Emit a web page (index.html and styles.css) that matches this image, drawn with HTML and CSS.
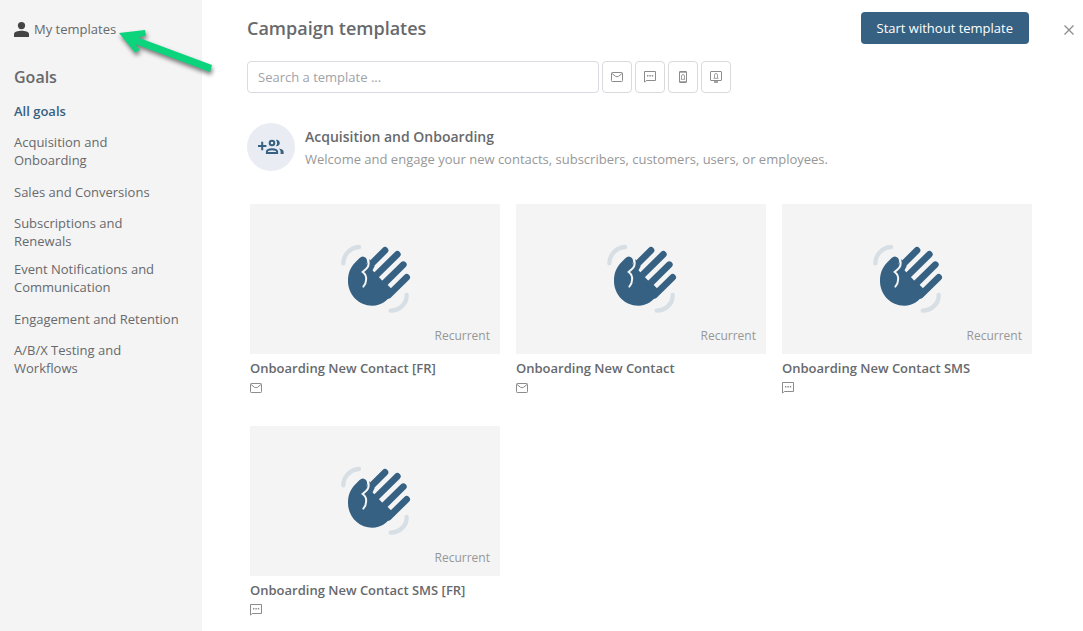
FILE: index.html
```html
<!DOCTYPE html>
<html lang="en">
<head>
    <meta charset="UTF-8">
    <meta name="viewport" content="width=device-width, initial-scale=1.0">
    <title>Campaign templates</title>
    <link rel="stylesheet" href="styles.css">
</head>
<body>
    <svg class="symbols" aria-hidden="true">
        <symbol id="icon-mail" viewBox="0 0 12 10">
            <rect x="0.5" y="0.5" width="11" height="9" rx="0.8" fill="none" stroke="currentColor"/>
            <path d="M1 1.5 L4.5 4.3 Q6 5.2 7.5 4.3 L11 1.5" fill="none" stroke="currentColor"/>
        </symbol>
        <symbol id="icon-sms" viewBox="0 0 12 12">
            <path d="M0.5 11.2 V0.5 H11.5 V9.5 H2.2 Z" fill="none" stroke="currentColor"/>
            <path d="M3 4h1.4v1.4H3zM5.4 4h1.4v1.4H5.4zM7.8 4h1.4v1.4H7.8z" fill="currentColor"/>
        </symbol>
        <symbol id="icon-hand" viewBox="0 0 330 285">
            <path class="wave" d="M70 100 C70 75 90 53 117 51"/>
            <path class="wave" d="M260 195 C261 220 240 241 212 242"/>
            <path class="palm" d="M118 85 Q128 74 138 84 Q144 92 139 104 L140 112 L148 112 L163 127 L177 142 L187 152 L203 165 L213 175 L219 190 C199 214 184 227 157 227 C116 227 84 194 84 153 C84 129 91 113 104 99 Z"/>
            <path class="palm" d="M143 95 L148 88 L164 108 L152 132 L138 128 Z"/>
            <path class="finger" d="M140 116 L195 61"/>
            <path class="finger" d="M168 136 L232 73"/>
            <path class="finger" d="M191 162 L250 104"/>
            <path class="finger" d="M205 196 L260 142"/>
            <path class="crease" d="M145 90 Q149 108 138 117 L128 126 Q141 135 138 151 Q138 162 130 170"/>
        </symbol>
    </svg>

    <div class="page">
        <aside class="sidebar">
            <div class="my-templates">
                <svg class="user-icon" viewBox="0 0 15 15" aria-hidden="true">
                    <circle cx="7.5" cy="3.6" r="3.6"/>
                    <path d="M0 15 V12.2 C0 9.8 4 8.8 7.5 8.8 S15 9.8 15 12.2 V15 Z"/>
                </svg>
                <a href="#">My templates</a>
                <svg class="arrow" viewBox="0 0 102 60" aria-hidden="true">
                    <path d="M4 11 L30 8 L31 13.5 L23 15.5 L97 43 L95 50 L20 22 L25 28 L20 30.5 Z"/>
                </svg>
            </div>
            <h2 class="goals-title">Goals</h2>
            <nav class="goals">
                <a class="goal active" href="#">All goals</a>
                <a class="goal" href="#">Acquisition and Onboarding</a>
                <a class="goal" href="#">Sales and Conversions</a>
                <a class="goal" href="#">Subscriptions and Renewals</a>
                <a class="goal" href="#">Event Notifications and Communication</a>
                <a class="goal" href="#">Engagement and Retention</a>
                <a class="goal" href="#">A/B/X Testing and Workflows</a>
            </nav>
        </aside>

        <main class="content">
            <header class="header">
                <h1>Campaign templates</h1>
                <button class="btn-primary" type="button">Start without template</button>
                <button class="btn-close" type="button" aria-label="Close">
                    <svg width="10" height="10" viewBox="0 0 10 10"><path d="M0.5 0.5 L9.5 9.5 M9.5 0.5 L0.5 9.5" fill="none" stroke="currentColor" stroke-width="1.3"/></svg>
                </button>
            </header>

            <div class="filters">
                <input class="search" type="text" placeholder="Search a template ..." aria-label="Search a template">
                <button class="filter" type="button" aria-label="Email">
                    <svg width="12" height="10"><use href="#icon-mail"/></svg>
                </button>
                <button class="filter" type="button" aria-label="SMS">
                    <svg width="12" height="12"><use href="#icon-sms"/></svg>
                </button>
                <button class="filter" type="button" aria-label="Mobile push">
                    <svg width="8" height="12" viewBox="0 0 8 12" fill="none" stroke="currentColor">
                        <rect x="0.5" y="0.5" width="7" height="11" rx="0.5"/>
                        <path d="M0.5 1.2 H7.5 M0.5 10.8 H7.5"/>
                        <path d="M2.5 8 V5 Q2.5 3.5 4 3.5 T5.5 5 V8 M1.8 8.3 H6.2" stroke-width="0.8"/>
                    </svg>
                </button>
                <button class="filter" type="button" aria-label="Web push">
                    <svg width="12" height="12" viewBox="0 0 12 12" fill="none" stroke="currentColor">
                        <rect x="0.5" y="0.5" width="11" height="9" rx="0.5"/>
                        <path d="M4.5 7 V4 Q4.5 2.5 6 2.5 T7.5 4 V7 M3.5 7.3 H8.5" stroke-width="0.8"/>
                        <path d="M4 11 H8" stroke-width="1.6"/>
                    </svg>
                </button>
            </div>

            <section>
                <div class="section-head">
                    <span class="section-icon">
                        <svg width="26" height="16" viewBox="0 0 26 16" fill="none" stroke="currentColor" stroke-width="2" aria-hidden="true">
                            <path d="M0 7 H8.4 M4.2 2.8 V11.2"/>
                            <circle cx="14" cy="4" r="2.3"/>
                            <path d="M8.9 14.1 V12.7 C8.9 11 11.5 10.2 14 10.2 S19.1 11 19.1 12.7 V14.1 Z"/>
                            <path d="M18 0.9 C20 0.6 21.8 2 21.8 4 S20 7.4 18 7.1 Q20.2 4 18 0.9 Z M20.8 9.6 C23.5 10 25.6 11 25.6 12.8 V15 H22.6 V12.8 Q22.6 11 20.8 9.6 Z" fill="currentColor" stroke="none"/>
                        </svg>
                    </span>
                    <div class="section-info">
                        <h2 class="section-title">Acquisition and Onboarding</h2>
                        <p class="section-text">Welcome and engage your new contacts, subscribers, customers, users, or employees.</p>
                    </div>
                </div>

                <div class="cards">
                    <article class="card">
                        <div class="preview">
                            <svg class="hand" aria-hidden="true"><use href="#icon-hand"/></svg>
                            <span class="type">Recurrent</span>
                        </div>
                        <h3>Onboarding New Contact [FR]</h3>
                        <svg class="channel" aria-hidden="true"><use href="#icon-mail"/></svg>
                    </article>
                    <article class="card">
                        <div class="preview">
                            <svg class="hand" aria-hidden="true"><use href="#icon-hand"/></svg>
                            <span class="type">Recurrent</span>
                        </div>
                        <h3>Onboarding New Contact</h3>
                        <svg class="channel" aria-hidden="true"><use href="#icon-mail"/></svg>
                    </article>
                    <article class="card">
                        <div class="preview">
                            <svg class="hand" aria-hidden="true"><use href="#icon-hand"/></svg>
                            <span class="type">Recurrent</span>
                        </div>
                        <h3>Onboarding New Contact SMS</h3>
                        <svg class="channel" aria-hidden="true"><use href="#icon-sms"/></svg>
                    </article>
                    <article class="card">
                        <div class="preview">
                            <svg class="hand" aria-hidden="true"><use href="#icon-hand"/></svg>
                            <span class="type">Recurrent</span>
                        </div>
                        <h3>Onboarding New Contact SMS [FR]</h3>
                        <svg class="channel" aria-hidden="true"><use href="#icon-sms"/></svg>
                    </article>
                </div>
            </section>
        </main>
    </div>
</body>
</html>
```
FILE: styles.css
```css
* {
    box-sizing: border-box;
}

body {
    margin: 0;
    font-family: "Open Sans", sans-serif;
    font-size: 13px;
    line-height: 18px;
    color: #67696c;
    background: #fff;
}

h1, h2, h3, p {
    margin: 0;
    font-weight: 600;
}

a {
    color: inherit;
    text-decoration: none;
}

button {
    font: inherit;
    padding: 0;
    cursor: pointer;
}

svg {
    display: block;
}

.symbols {
    position: absolute;
    width: 0;
    height: 0;
}

.page {
    display: flex;
    min-height: 100vh;
}

/* Sidebar */
.sidebar {
    flex: 0 0 202px;
    padding: 20px 22px 20px 14px;
    background: #f4f4f4;
}

.my-templates {
    position: relative;
    display: flex;
    align-items: center;
    gap: 5px;
}

.user-icon {
    width: 15px;
    height: 15px;
    fill: #444;
}

.arrow {
    position: absolute;
    left: 101px;
    top: 2px;
    width: 102px;
    height: 60px;
    fill: #0bd47d;
    filter: drop-shadow(1px 3px 2px rgba(0, 0, 0, 0.5));
}

.goals-title {
    margin-top: 28px;
    font-size: 16px;
    line-height: 22px;
}

.goals {
    display: flex;
    flex-direction: column;
    margin-top: 5px;
}

.goal {
    display: flex;
    align-items: center;
    min-height: 35px;
    padding: 5px 0;
}

.goal.active {
    color: #366182;
    font-weight: 600;
}

/* Main */
.content {
    flex: 1;
    min-width: 0;
    padding: 12px 9px 12px 45px;
}

.header {
    display: flex;
    align-items: center;
}

.header h1 {
    flex: 1;
    font-size: 18px;
    line-height: 32px;
}

.btn-primary {
    height: 32px;
    padding: 0 16px;
    border: 0;
    border-radius: 4px;
    background: #366182;
    color: #fff;
}

.btn-close {
    margin-left: 35px;
    padding-top: 4px;
    border: 0;
    background: none;
    color: #8c8c8c;
}

.filters {
    display: flex;
    gap: 3px;
    margin-top: 17px;
}

.search {
    width: 352px;
    height: 32px;
    padding: 0 10px;
    border: 1px solid #dadbe2;
    border-radius: 4px;
    font: inherit;
    color: inherit;
}

.search::placeholder {
    color: #a0a3a8;
}

.filter {
    display: flex;
    align-items: center;
    justify-content: center;
    width: 30px;
    height: 32px;
    border: 1px solid #dadada;
    border-radius: 4px;
    background: #fff;
    color: #8c8c8c;
}

.section-head {
    display: flex;
    align-items: center;
    gap: 10px;
    margin-top: 30px;
}

.section-icon {
    display: flex;
    align-items: center;
    justify-content: center;
    width: 48px;
    height: 48px;
    border-radius: 50%;
    background: #e9edf3;
    color: #366182;
}

.section-info {
    padding-top: 2px;
}

.section-title {
    font-size: 14px;
    line-height: 22px;
}

.section-text {
    font-weight: 400;
    line-height: 22px;
    color: #979797;
}

.cards {
    display: grid;
    grid-template-columns: repeat(auto-fill, 250px);
    gap: 28px 16px;
    margin-top: 33px;
    padding-left: 3px;
}

.card {
    min-height: 194px;
}

.preview {
    display: flex;
    flex-direction: column;
    align-items: center;
    height: 150px;
    padding: 26px 10px 9px;
    background: #f4f4f4;
}

.hand {
    width: 110px;
    height: 95px;
}

.type {
    align-self: flex-end;
    margin-top: 2px;
    font-size: 12px;
    color: #979797;
}

.card h3 {
    margin-top: 4px;
    font-size: 13px;
    line-height: 20px;
}

.channel {
    width: 12px;
    height: 12px;
    margin-top: 4px;
    color: #8c8c8c;
}

/* Waving hand */
.wave {
    fill: none;
    stroke: #d7dfe5;
    stroke-width: 13px;
    stroke-linecap: round;
}

.palm {
    fill: #366182;
}

.finger {
    fill: none;
    stroke: #366182;
    stroke-width: 20px;
    stroke-linecap: round;
}

.crease {
    fill: none;
    stroke: #f4f4f4;
    stroke-width: 6px;
    stroke-linecap: round;
}
```
